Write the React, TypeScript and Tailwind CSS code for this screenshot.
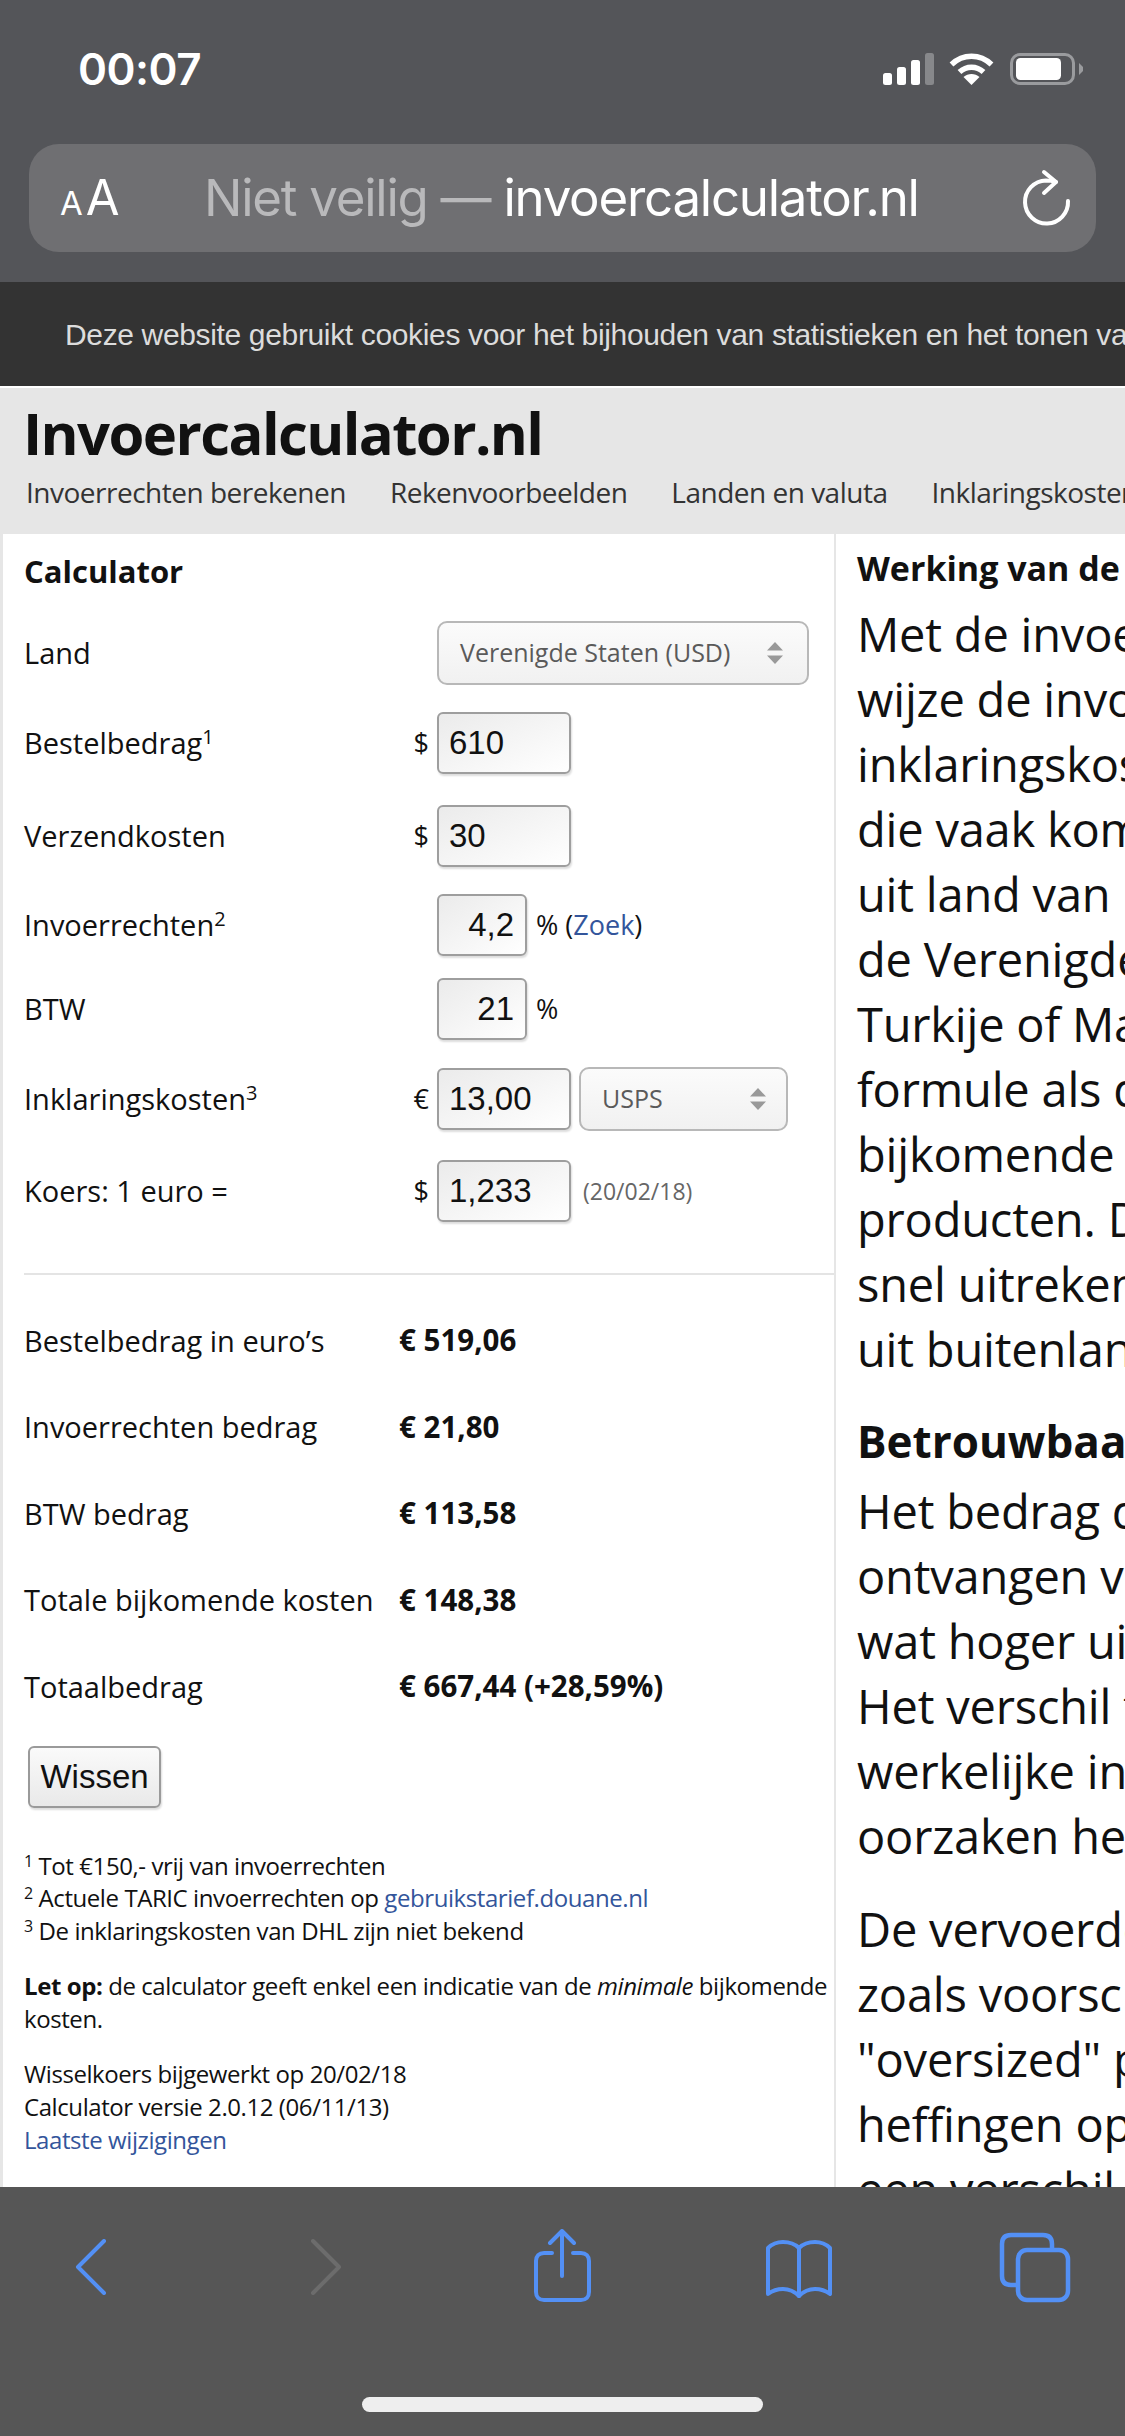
const openSans = { fontFamily: '"Open Sans", sans-serif' };

const rightLines1 = [
  'Met de invoercalculator',
  'wijze de invoerrechten',
  'inklaringskosten',
  'die vaak komen',
  'uit land van herkomst',
  'de Verenigde Staten',
  'Turkije of Malaysia',
  'formule als de',
  'bijkomende kosten',
  'producten. De',
  'snel uitrekenen',
  'uit buitenland',
];
const rightLines2 = ['Het bedrag dat', 'ontvangen van', 'wat hoger uit', 'Het verschil tussen', 'werkelijke invoer', 'oorzaken hebben'];
const rightLines3 = ['De vervoerders', 'zoals voorschot', '"oversized" pakket', 'heffingen op', 'een verschil'];

function TextInput({ value, wide = true }: { value: string; wide?: boolean }) {
  return (
    <div
      className={`flex h-[62px] items-center rounded-md border-2 border-[#9e9e9e] bg-linear-to-br from-[#ebebeb] to-[#ffffff] text-[33px] text-[#111] shadow-[1px_2px_2px_#ddd] ${
        wide ? 'w-[134px] pl-[10px]' : 'w-[90px] justify-end pr-[11px]'
      }`}
      style={{ fontFamily: '"Liberation Sans", sans-serif' }}
    >
      {value}
    </div>
  );
}

function SelectBox({ label, className }: { label: string; className: string }) {
  return (
    <div className={`flex items-center justify-between rounded-[10px] border-2 border-[#b8b8b8] bg-linear-to-b from-[#fbfbfb] to-[#f1f1f1] text-[25px] text-[#5a5a5a] ${className}`}>
      <span>{label}</span>
      <svg width="16" height="22" viewBox="0 0 16 22" fill="#999">
        <path d="M8 0 16 8.5H0ZM0 13.5H16L8 22Z" />
      </svg>
    </div>
  );
}

function Row({ label, sup, symbol, className, children }: { label: string; sup?: string; symbol?: string; className?: string; children: React.ReactNode }) {
  return (
    <div className={`flex items-center ${className ?? ''}`}>
      <div className="w-[368px] text-[29px] text-[#111]">
        {label}
        {sup && <sup className="text-[20px]">{sup}</sup>}
      </div>
      <div className="w-[45px] pr-[8px] text-right text-[27px] text-[#111]">{symbol}</div>
      {children}
    </div>
  );
}

function Result({ label, value }: { label: string; value: string }) {
  return (
    <div className="flex h-[86.5px] items-center text-[29px] text-[#111]">
      <div className="w-[375px]">{label}</div>
      <div className="text-[29.5px] font-bold">{value}</div>
    </div>
  );
}

function BodyBlock({ lines, className }: { lines: string[]; className?: string }) {
  return (
    <div className={className}>
      {lines.map((line) => (
        <div key={line} className="h-[65px] text-[47px] leading-[65px] tracking-[-0.2px] whitespace-nowrap text-[#111]">
          {line}
        </div>
      ))}
    </div>
  );
}

function StatusIcons() {
  return (
    <div className="flex items-center">
      <svg width="51" height="32" viewBox="0 0 51 32">
        <rect x="0" y="20" width="9" height="12" rx="2.5" fill="#fff" />
        <rect x="14" y="14" width="9" height="18" rx="2.5" fill="#fff" />
        <rect x="28" y="7" width="9" height="25" rx="2.5" fill="#fff" />
        <rect x="42" y="0" width="9" height="32" rx="2.5" fill="#87888b" />
      </svg>
      <svg className="ml-[15px]" width="45" height="32" viewBox="0 0 45 32" fill="none" stroke="#fff" strokeWidth="5.5">
        <path d="M2.5 11.5C14 0.5 31 0.5 42.5 11.5" />
        <path d="M10.5 19C17.5 12.5 27.5 12.5 34.5 19" />
        <path d="M22.5 32 14.5 24C19 20 26 20 30.5 24Z" fill="#fff" stroke="none" />
      </svg>
      <svg className="ml-[16px]" width="74" height="32" viewBox="0 0 74 32">
        <rect x="1.5" y="1.5" width="62" height="29" rx="8.5" fill="none" stroke="#9a9b9e" strokeWidth="3" />
        <rect x="6" y="5" width="45" height="22" rx="4.5" fill="#fff" />
        <path d="M69 10 73 14V18L69 22Z" fill="#9a9b9e" />
      </svg>
    </div>
  );
}

export default function App() {
  return (
    <div className="flex h-[2436px] w-[1125px] flex-col overflow-hidden bg-white" style={openSans}>
      {/* Safari top */}
      <div className="h-[282px] shrink-0 bg-[#545559]" style={{ fontFamily: 'Inter, sans-serif' }}>
        <div className="flex h-[138px] items-center justify-between pr-[41px] pl-[78px]">
          <span className="text-[44px] font-semibold tracking-[-0.5px] text-white">00:07</span>
          <StatusIcons />
        </div>
        <div className="mx-[29px] mt-[6px] flex h-[108px] items-center rounded-[30px] bg-[#6f6f72] pr-[25px] pl-[31px]">
          <div className="flex w-[144px] items-baseline text-white">
            <span className="text-[33px]">A</span>
            <span className="ml-[3px] text-[49px]">A</span>
          </div>
          <div className="flex-1 text-[51px] tracking-[-1.25px] whitespace-nowrap text-[#b9b9bb]">
            Niet veilig — <span className="text-white">invoercalculator.nl</span>
          </div>
          <svg width="50" height="58" viewBox="0 0 50 58" fill="none" stroke="#fff" strokeWidth="4" strokeLinecap="round" strokeLinejoin="round">
            <path d="M47 32A21.5 21.5 0 1 1 25 11.5Q30 11.5 35 13" />
            <path d="M23 3 35 13 23 24" />
          </svg>
        </div>
      </div>

      {/* Cookie bar */}
      <div className="flex h-[104px] shrink-0 items-center overflow-hidden bg-[#333333] pl-[65px]">
        <span className="text-[30px] tracking-[-0.35px] whitespace-nowrap text-[#dcdcdc]" style={{ fontFamily: '"Liberation Sans", sans-serif' }}>
          Deze website gebruikt cookies voor het bijhouden van statistieken en het tonen van advertenties
        </span>
      </div>

      {/* Site header */}
      <div className="mt-[2px] h-[146px] shrink-0 overflow-hidden bg-[#e6e6e6] pl-[23px]">
        <h1 className="pt-[9px] text-[58px] leading-[72px] font-bold tracking-[-1.6px] text-[#111]">Invoercalculator.nl</h1>
        <nav className="mt-[3px] flex gap-[44px] pl-[3px] text-[28px] leading-[40px] tracking-[-0.5px] whitespace-nowrap text-[#333]">
          <span>Invoerrechten berekenen</span>
          <span>Rekenvoorbeelden</span>
          <span>Landen en valuta</span>
          <span>Inklaringskosten</span>
        </nav>
      </div>

      <div className="flex min-h-0 flex-1 overflow-hidden">
        {/* Calculator column */}
        <div className="w-[836px] shrink-0 border-r-2 border-l-[3px] border-[#e6e6e6] pl-[21px]">
          <h2 className="flex h-[74px] items-center text-[31px] font-bold text-[#111]">Calculator</h2>
          <Row label="Land" className="mt-[13px]">
            <SelectBox label="Verenigde Staten (USD)" className="h-[64px] w-[372px] pr-[24px] pl-[21px]" />
          </Row>
          <Row label="Bestelbedrag" sup="1" symbol="$" className="mt-[27px]">
            <TextInput value="610" />
          </Row>
          <Row label="Verzendkosten" symbol="$" className="mt-[31px]">
            <TextInput value="30" />
          </Row>
          <Row label="Invoerrechten" sup="2" className="mt-[27px]">
            <TextInput value="4,2" wide={false} />
            <span className="ml-[9px] text-[27px] text-[#111]">
              % (<span className="text-[#33559b]">Zoek</span>)
            </span>
          </Row>
          <Row label="BTW" className="mt-[22px]">
            <TextInput value="21" wide={false} />
            <span className="ml-[9px] text-[27px] text-[#111]">%</span>
          </Row>
          <Row label="Inklaringskosten" sup="3" symbol="€" className="mt-[27px]">
            <TextInput value="13,00" />
            <SelectBox label="USPS" className="ml-[8px] h-[64px] w-[209px] pr-[20px] pl-[21px]" />
          </Row>
          <Row label="Koers: 1 euro =" symbol="$" className="mt-[29px]">
            <TextInput value="1,233" />
            <span className="ml-[12px] text-[23px] text-[#666]">(20/02/18)</span>
          </Row>

          <div className="mt-[51px] h-[2px] bg-[#e4e4e4]" />

          <div className="mt-[22px]">
            <Result label="Bestelbedrag in euro’s" value="€ 519,06" />
            <Result label="Invoerrechten bedrag" value="€ 21,80" />
            <Result label="BTW bedrag" value="€ 113,58" />
            <Result label="Totale bijkomende kosten" value="€ 148,38" />
            <Result label="Totaalbedrag" value="€ 667,44 (+28,59%)" />
          </div>

          <button
            className="mt-[16px] ml-[4px] flex h-[62px] w-[133px] items-center justify-center rounded-md border-2 border-[#9a9a9a] bg-linear-to-b from-[#fafafa] to-[#e9e9e9] text-[33px] text-[#111] shadow-[1px_2px_2px_#ddd]"
            style={{ fontFamily: '"Liberation Sans", sans-serif' }}
          >
            Wissen
          </button>

          <div className="mt-[42px] text-[24px] leading-[32.6px] tracking-[-0.42px] text-[#111]">
            <div><sup className="text-[16px]">1</sup> Tot €150,- vrij van invoerrechten</div>
            <div><sup className="text-[16px]">2</sup> Actuele TARIC invoerrechten op <span className="text-[#33559b]">gebruikstarief.douane.nl</span></div>
            <div><sup className="text-[16px]">3</sup> De inklaringskosten van DHL zijn niet bekend</div>
            <p className="mt-[23px]">
              <b>Let op:</b> de calculator geeft enkel een indicatie van de <i>minimale</i> bijkomende kosten.
            </p>
            <p className="mt-[23px]">
              Wisselkoers bijgewerkt op 20/02/18
              <br />
              Calculator versie 2.0.12 (06/11/13)
              <br />
              <span className="text-[#33559b]">Laatste wijzigingen</span>
            </p>
          </div>
        </div>

        {/* Article column */}
        <div className="min-w-0 flex-1 overflow-hidden pl-[21px]">
          <h2 className="h-[56px] pt-[10px] text-[34px] leading-[48px] font-bold whitespace-nowrap text-[#111]">Werking van de invoercalculator</h2>
          <BodyBlock lines={rightLines1} className="mt-[12px]" />
          <h3 className="mt-[29px] text-[44px] leading-[60px] font-bold whitespace-nowrap text-[#111]">Betrouwbaarheid</h3>
          <BodyBlock lines={rightLines2} className="mt-[8px]" />
          <BodyBlock lines={rightLines3} className="mt-[28px]" />
        </div>
      </div>

      {/* Safari toolbar */}
      <div className="relative h-[249px] shrink-0 bg-[#565656]">
        <div className="flex items-start pt-[42px]">
          <svg className="mt-[10px] ml-[75px]" width="32" height="56" viewBox="0 0 32 56" fill="none" stroke="#5390f5" strokeWidth="4" strokeLinecap="round" strokeLinejoin="round">
            <path d="M29 2 3 28 29 54" />
          </svg>
          <svg className="mt-[10px] ml-[203px]" width="32" height="56" viewBox="0 0 32 56" fill="none" stroke="#6c6c6c" strokeWidth="4" strokeLinecap="round" strokeLinejoin="round">
            <path d="M3 2 29 28 3 54" />
          </svg>
          <svg className="ml-[191px]" width="58" height="74" viewBox="0 0 58 74" fill="none" stroke="#5390f5" strokeWidth="4" strokeLinecap="round" strokeLinejoin="round">
            <path d="M19 24H11C6 24 3 27 3 32V63C3 68 6 71 11 71H48C53 71 56 68 56 63V32C56 27 53 24 48 24H40" />
            <path d="M29 47V3" />
            <path d="M17 14 29 2 41 14" />
          </svg>
          <svg className="mt-[9px] ml-[173px]" width="70" height="61" viewBox="0 0 70 61" fill="none" stroke="#5390f5" strokeWidth="4" strokeLinecap="round" strokeLinejoin="round">
            <path d="M35 10C30 5 24 4 19 4 13 4 8 6 4 10V56C8 53 13 51 19 51 25 51 30 53 35 58 40 53 45 51 51 51 57 51 62 53 66 56V10C62 6 57 4 51 4 45 4 40 5 35 10Z" />
            <path d="M35 10V58" />
          </svg>
          <svg className="mt-[2px] ml-[164px]" width="74" height="73" viewBox="0 0 74 73" fill="none" stroke="#5390f5" strokeWidth="4.5" strokeLinejoin="round">
            <path d="M20 54H13C7 54 4 51 4 45V13C4 7 7 4 13 4H45C51 4 54 7 54 13V19" />
            <rect x="20" y="19" width="50" height="50" rx="9" />
          </svg>
        </div>
        <div className="absolute top-[210px] left-[362px] h-[15px] w-[401px] rounded-full bg-[#eeeeee]" />
      </div>
    </div>
  );
}
